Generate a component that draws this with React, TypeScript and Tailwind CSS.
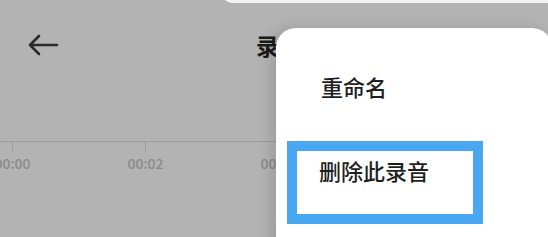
const TICKS = ['00:00', '00:02', '00:04'];

function BackArrow() {
  return (
    <svg width="32" height="24" viewBox="0 0 32 24" fill="none" aria-hidden="true">
      <path
        d="M30 12H3M12 3L3 12L12 21"
        stroke="#2a2a2a"
        strokeWidth="2.6"
        strokeLinecap="round"
        strokeLinejoin="round"
      />
    </svg>
  );
}

function Timeline() {
  return (
    <div className="w-[300px] border-t border-[#9c9c9c]">
      <div className="flex ml-[-54px]">
        {TICKS.map((t) => (
          <div key={t} className="flex w-[133px] shrink-0 flex-col items-center">
            <div className="h-[9px] w-px bg-[#9c9c9c]" />
            <span className="mt-[2px] text-[14px] leading-[20px] font-medium text-[#8a8a8a]">
              {t}
            </span>
          </div>
        ))}
      </div>
    </div>
  );
}

function ActionMenu() {
  return (
    <div className="absolute left-[276px] top-[28px] h-[240px] w-[276px] rounded-[20px] bg-white shadow-[-6px_0_14px_rgba(0,0,0,0.12)]">
      <ul className="flex flex-col gap-[54px] pt-[43px] pl-[45px] text-[22px] leading-[30px] font-medium text-[#1f1f1f]">
        <li>重命名</li>
        <li className="-ml-[2px]">删除此录音</li>
      </ul>
      <div className="absolute left-[11px] top-[113px] h-[83px] w-[196px] border-[10px] border-[#4aa7f1]" />
    </div>
  );
}

export default function App() {
  return (
    <div
      className="relative h-[237px] w-[548px] overflow-hidden bg-[#b3b3b3]"
      style={{ fontFamily: '"Noto Sans CJK SC", "Noto Sans", sans-serif' }}
    >
      <div className="absolute left-[222px] top-[-20px] h-[23px] w-[340px] rounded-bl-[10px] bg-[#f4f4f4]" />
      <header className="flex h-[90px] items-center pl-[27px]">
        <BackArrow />
        <h1 className="ml-[197px] text-[23px] font-bold text-[#1a1a1a]">录音</h1>
      </header>
      <div className="mt-[51px]">
        <Timeline />
      </div>
      <ActionMenu />
    </div>
  );
}
